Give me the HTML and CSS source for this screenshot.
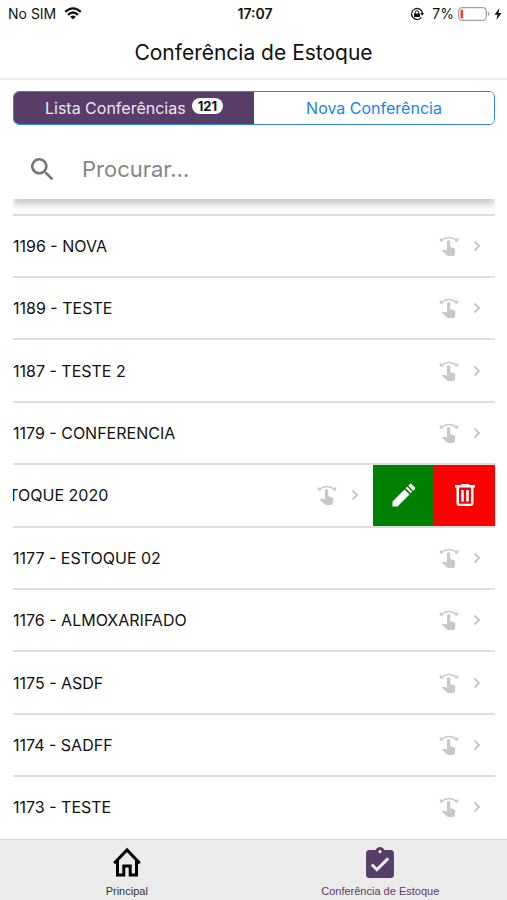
FILE: index.html
```html
<!DOCTYPE html>
<html lang="pt-BR">
<head>
<meta charset="utf-8">
<meta name="viewport" content="width=device-width, initial-scale=1">
<title>Conferência de Estoque</title>
<link rel="stylesheet" href="styles.css">
</head>
<body>
<svg class="symbols" aria-hidden="true">
  <symbol id="swipe" viewBox="0 0 20 22">
    <path d="M2 5.500Q10-.7 18 5.500" fill="none" stroke="currentColor" stroke-width="1.500"/>
    <path d="M.8 2.500v4h4zM19.200 2.500v4h-4z"/>
    <path d="M8 6.500a1.600 1.600 0 0 1 3.200 0V12l4.300 1.500q1 .5.900 1.600l-.6 4.400q-.2 1.500-1.700 1.500H9.500q-1 0-1.700-.7L3 15.800l.7-.8q.5-.4 1.200-.3l3.100.8z"/>
  </symbol>
  <symbol id="chevron" viewBox="0 0 8 12">
    <path d="M1.500 1.500 6 6 1.500 10.500" fill="none" stroke="currentColor" stroke-width="1.700"/>
  </symbol>
</svg>
<div class="app">
  <div class="status">
    <div class="status-side">
      <span>No SIM</span>
      <svg class="wifi" viewBox="0 0 18 13" aria-hidden="true">
        <g fill="none" stroke="currentColor" stroke-width="2.300"><path d="M1.200 4.900Q9-2.100 16.800 4.900"/><path d="M4 7.800Q9 3.300 14 7.800"/></g>
        <path d="M9 12.500 6.200 9.700Q9 7.500 11.800 9.700z"/>
      </svg>
    </div>
    <strong class="time">17:07</strong>
    <div class="status-side status-right">
      <svg class="lock" viewBox="0 0 14 14" aria-hidden="true">
        <path d="M11.500 10.300A5.500 5.500 0 1 1 12.500 6" fill="none" stroke="currentColor" stroke-width="1.200"/>
        <path d="M10.300 6h3.700l-1.800 2.700zM4 6.500h6V10H4z"/>
        <path d="M5.300 7V5.400a1.700 1.700 0 0 1 3.400 0V7" fill="none" stroke="currentColor"/>
      </svg>
      <span>7%</span>
      <svg class="battery" viewBox="0 0 32 14" aria-hidden="true">
        <rect x=".7" y=".7" width="27.600" height="12.600" rx="3.500" fill="#fff" stroke="#a3a3a3" stroke-width="1.300"/>
        <path d="M29.800 4.500q3.400 2.500 0 5z" fill="#a3a3a3"/>
        <rect x="2.500" y="2.500" width="2.500" height="9" rx="1" fill="#ff3b30"/>
      </svg>
      <svg class="bolt" viewBox="0 0 8 12" aria-hidden="true"><path d="M5.500 0 .5 6.800h3L2.500 12l5-7h-3z"/></svg>
    </div>
  </div>
  <header class="header"><h1>Conferência de Estoque</h1></header>
  <main class="content">
    <div class="segment">
      <button type="button" class="segment-button active">Lista Conferências <span class="badge">121</span></button>
      <button type="button" class="segment-button">Nova Conferência</button>
    </div>
    <label class="search">
      <svg viewBox="3 3 18 18" aria-hidden="true"><path d="M15.500 14h-.79l-.28-.27A6.500 6.500 0 1 0 13.730 14.430l.27.28v.79l5 4.990L20.490 19zm-6 0a4.500 4.500 0 1 1 0-9 4.500 4.500 0 0 1 0 9z"/></svg>
      <input type="search" placeholder="Procurar..." aria-label="Procurar">
    </label>
    <ul class="list">
      <li class="row"><a class="item" href="#"><span class="name">1196 - NOVA</span><svg class="swipe"><use href="#swipe"/></svg><svg class="chevron"><use href="#chevron"/></svg></a></li>
      <li class="row"><a class="item" href="#"><span class="name">1189 - TESTE</span><svg class="swipe"><use href="#swipe"/></svg><svg class="chevron"><use href="#chevron"/></svg></a></li>
      <li class="row"><a class="item" href="#"><span class="name">1187 - TESTE 2</span><svg class="swipe"><use href="#swipe"/></svg><svg class="chevron"><use href="#chevron"/></svg></a></li>
      <li class="row"><a class="item" href="#"><span class="name">1179 - CONFERENCIA</span><svg class="swipe"><use href="#swipe"/></svg><svg class="chevron"><use href="#chevron"/></svg></a></li>
      <li class="row open">
        <a class="item" href="#"><span class="name">1178 - NOVA ESTOQUE 2020</span><svg class="swipe"><use href="#swipe"/></svg><svg class="chevron"><use href="#chevron"/></svg></a>
        <div class="actions">
          <button type="button" class="edit" aria-label="Editar"><svg viewBox="0 0 24 24"><path d="M.5 18.500V23.500h5L17.500 11.500l-5-5zM13.700 5.300 18.700 10.300 20.200 8.800 15.200 3.800zM16.300 2.700 21.300 7.700l1.700-1.700q.8-.8 0-1.600l-3.400-3.400q-.8-.8-1.600 0z"/></svg></button>
          <button type="button" class="delete" aria-label="Excluir"><svg viewBox="0 0 24 24"><path fill-rule="evenodd" d="M8 1v1H2v2.500h1.500V20a3 3 0 0 0 3 3h11a3 3 0 0 0 3-3V4.500H22V2h-6V1zM6 4.500h12V20q0 .8-.8.8H6.800Q6 20.800 6 20zM8.200 7v11.500h2.600V7zm5 0v11.500h2.600V7z"/></svg></button>
        </div>
      </li>
      <li class="row"><a class="item" href="#"><span class="name">1177 - ESTOQUE 02</span><svg class="swipe"><use href="#swipe"/></svg><svg class="chevron"><use href="#chevron"/></svg></a></li>
      <li class="row"><a class="item" href="#"><span class="name">1176 - ALMOXARIFADO</span><svg class="swipe"><use href="#swipe"/></svg><svg class="chevron"><use href="#chevron"/></svg></a></li>
      <li class="row"><a class="item" href="#"><span class="name">1175 - ASDF</span><svg class="swipe"><use href="#swipe"/></svg><svg class="chevron"><use href="#chevron"/></svg></a></li>
      <li class="row"><a class="item" href="#"><span class="name">1174 - SADFF</span><svg class="swipe"><use href="#swipe"/></svg><svg class="chevron"><use href="#chevron"/></svg></a></li>
      <li class="row"><a class="item" href="#"><span class="name">1173 - TESTE</span><svg class="swipe"><use href="#swipe"/></svg><svg class="chevron"><use href="#chevron"/></svg></a></li>
    </ul>
  </main>
  <nav class="tabs">
    <a class="tab" href="#">
      <svg viewBox="0 0 28 29" aria-hidden="true"><path d="M1.200 15.300 14 2l12.800 13.300M4.500 12.500v14.500h6.300v-9h6.400v9h6.300v-14.500" fill="none" stroke="currentColor" stroke-width="3"/></svg>
      <span>Principal</span>
    </a>
    <a class="tab current" href="#">
      <svg viewBox="3 1 18 20" aria-hidden="true"><path d="M19 3h-4.180C14.400 1.840 13.300 1 12 1c-1.300 0-2.400.84-2.820 2H5c-1.100 0-2 .9-2 2v14c0 1.100.9 2 2 2h14c1.100 0 2-.9 2-2V5c0-1.100-.9-2-2-2zm-7 0c.55 0 1 .45 1 1s-.45 1-1 1-1-.45-1-1 .45-1 1-1zm-2 14l-4-4 1.410-1.410L10 14.170l6.590-6.590L18 9l-8 8z"/></svg>
      <span>Conferência de Estoque</span>
    </a>
  </nav>
</div>
</body>
</html>
```

FILE: styles.css
```css
* { box-sizing: border-box; }
body {
  margin: 0;
  background: #fff;
  color: #111;
  font-family: Inter, "Liberation Sans", sans-serif;
}
svg { display: block; fill: currentColor; flex: none; }
button { border: 0; padding: 0; font: inherit; }
a { color: inherit; text-decoration: none; }
.symbols { position: absolute; width: 0; height: 0; }

.app { display: flex; flex-direction: column; min-height: 100vh; }

.status {
  display: flex;
  align-items: center;
  height: 27px;
  padding: 0 5px 0 8px;
  font-size: 14px;
}
.status-side { display: flex; align-items: center; flex: 1; gap: 8px; }
.status-right { justify-content: flex-end; gap: 4px; }
.time { font-weight: 600; }
.wifi { width: 18px; height: 13px; }
.lock { width: 14px; height: 14px; margin-right: 4px; }
.battery { width: 32px; height: 14px; }
.bolt { width: 8px; height: 12px; }

.header {
  display: flex;
  align-items: center;
  justify-content: center;
  height: 53px;
  border-bottom: 2px solid #ececec;
}
.header h1 { margin: 0; font-size: 21px; font-weight: 400; }

.content { display: flex; flex-direction: column; flex: 1; padding: 11px 12px 0 13px; }

.segment {
  display: flex;
  height: 34px;
  border: 1px solid #2f86e4;
  border-radius: 6px;
  overflow: hidden;
}
.segment-button {
  display: flex;
  align-items: center;
  justify-content: center;
  gap: 6px;
  flex: 1;
  background: #fff;
  color: #2482e8;
  font-size: 16px;
}
.segment-button.active { background: #583d68; color: #eee6f2; }
.badge {
  margin-bottom: 4px;
  padding: 0 6px;
  border-radius: 8px;
  background: #fff;
  color: #111;
  font-size: 13px;
  font-weight: 700;
  line-height: 16px;
}

.search {
  display: flex;
  align-items: center;
  gap: 28px;
  height: 60px;
  margin: 14px 0 15px;
  padding: 0 18px;
  color: #777;
  box-shadow: 0 5px 8px #c4c4c4;
  clip-path: inset(0 0 -14px 0);
}
.search svg { width: 23px; height: 23px; }
.search input {
  flex: 1;
  min-width: 0;
  padding: 0;
  border: 0;
  outline: 0;
  background: none;
  color: #333;
  font: 400 22px Inter, sans-serif;
}
.search input::placeholder { color: #858585; }

.list {
  display: flex;
  flex-direction: column;
  flex: 1;
  margin: 0;
  padding: 0 0 2px;
  list-style: none;
}
.row {
  display: flex;
  flex: 1;
  min-height: 48px;
  border-top: 2px solid #dedede;
  overflow: hidden;
}
.item { display: flex; align-items: center; flex: 0 0 100%; padding-right: 14px; }
.name { flex: 1; font-size: 16px; white-space: nowrap; }
.swipe { width: 20px; height: 22px; margin-right: 14px; color: #c8c8c8; }
.chevron { width: 8px; height: 12px; color: #bdbdbd; }
.open .item { margin-left: -122px; }
.actions { display: flex; flex: 0 0 122px; margin-top: -1px; }
.actions button { display: flex; align-items: center; justify-content: center; flex: 1; color: #fff; }
.actions svg { width: 24px; height: 24px; }
.edit { background: #008000; }
.delete { background: #f00; }

.tabs { display: flex; height: 61px; border-top: 1px solid #d8d8d8; background: #ebebeb; }
.tab {
  display: flex;
  flex-direction: column;
  align-items: center;
  flex: 1;
  gap: 7px;
  padding-top: 7px;
  color: #000;
  font: 11px "Liberation Sans", sans-serif;
}
.tab svg { width: 28px; height: 31px; }
.tab span { color: #333; }
.tab.current, .tab.current span { color: #583d68; }
```
